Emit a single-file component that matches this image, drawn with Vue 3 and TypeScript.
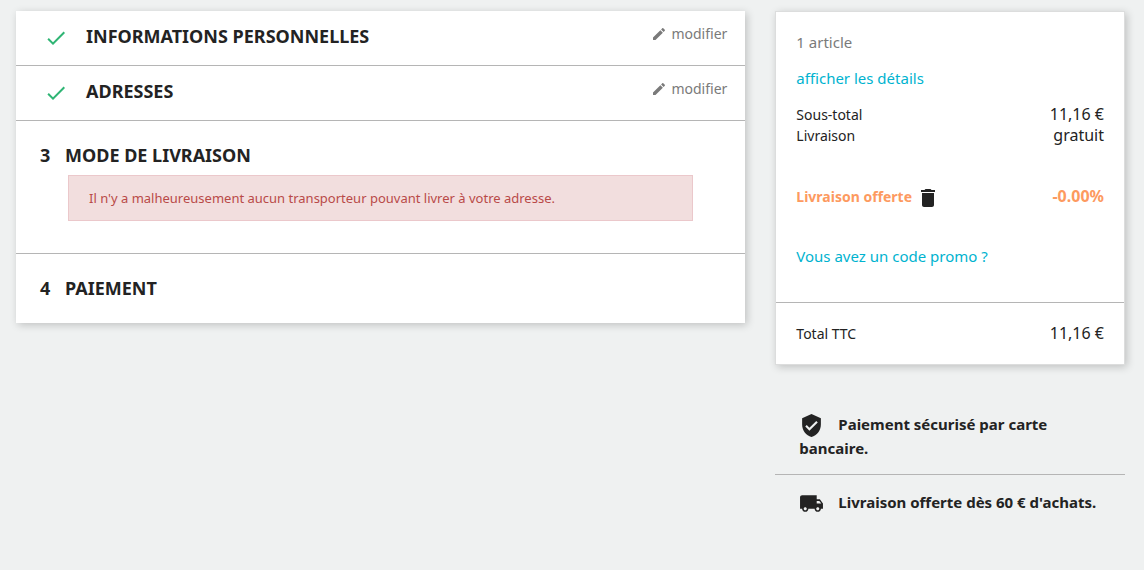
<script setup lang="ts">
interface DoneStep {
  id: string
  title: string
}

interface Reassurance {
  id: string
  text: string
  icon: string
}

const doneSteps: DoneStep[] = [
  { id: 'personal', title: 'Informations personnelles' },
  { id: 'addresses', title: 'Adresses' },
]

const reassurances: Reassurance[] = [
  {
    id: 'secure',
    text: 'Paiement sécurisé par carte bancaire.',
    icon: 'M12 1L3 5v6c0 5.55 3.84 10.74 9 12 5.16-1.26 9-6.45 9-12V5l-9-4zm-2 16l-4-4 1.41-1.41L10 14.17l6.59-6.59L18 9l-8 8z',
  },
  {
    id: 'shipping',
    text: "Livraison offerte dès 60 € d'achats.",
    icon: 'M20 8h-3V4H3c-1.1 0-2 .9-2 2v11h2c0 1.66 1.34 3 3 3s3-1.34 3-3h6c0 1.66 1.34 3 3 3s3-1.34 3-3h2v-5l-3-4zM6 18.5c-.83 0-1.5-.67-1.5-1.5s.67-1.5 1.5-1.5 1.5.67 1.5 1.5-.67 1.5-1.5 1.5zm13.5-9l1.96 2.5H17V9.5h2.5zm-1.5 9c-.83 0-1.5-.67-1.5-1.5s.67-1.5 1.5-1.5 1.5.67 1.5 1.5-.67 1.5-1.5 1.5z',
  },
]
</script>

<template>
  <div class="checkout">
    <main class="steps">
      <div class="card">
        <section v-for="step in doneSteps" :key="step.id" class="step step-done">
          <svg class="check" viewBox="0 0 24 24" aria-hidden="true">
            <path d="M9 16.17L4.83 12l-1.42 1.41L9 19 21 7l-1.41-1.41z" />
          </svg>
          <h1>{{ step.title }}</h1>
          <a class="edit" href="#">
            <svg viewBox="0 0 24 24" aria-hidden="true">
              <path d="M3 17.25V21h3.75L17.81 9.94l-3.75-3.75L3 17.25zM20.71 7.04c.39-.39.39-1.02 0-1.41l-2.34-2.34c-.39-.39-1.02-.39-1.41 0l-1.83 1.83 3.75 3.75 1.83-1.83z" />
            </svg>
            <span>modifier</span>
          </a>
        </section>

        <section class="step step-current">
          <h1><span class="number">3</span>Mode de livraison</h1>
          <p class="alert" role="alert">
            Il n'y a malheureusement aucun transporteur pouvant livrer à votre adresse.
          </p>
        </section>

        <section class="step step-next">
          <h1><span class="number">4</span>Paiement</h1>
        </section>
      </div>
    </main>

    <aside class="side">
      <div class="card summary">
        <div class="summary-body">
          <p class="count">1 article</p>
          <p class="details"><a href="#">afficher les détails</a></p>
          <div class="line">
            <span class="label">Sous-total</span>
            <span class="value">11,16 €</span>
          </div>
          <div class="line">
            <span class="label">Livraison</span>
            <span class="value">gratuit</span>
          </div>
          <div class="line voucher">
            <span class="label">Livraison offerte</span>
            <a class="remove" href="#" aria-label="Supprimer">
              <svg viewBox="0 0 24 24" aria-hidden="true">
                <path d="M6 19c0 1.1.9 2 2 2h8c1.1 0 2-.9 2-2V7H6v12zM19 4h-3.5l-1-1h-5l-1 1H5v2h14V4z" />
              </svg>
            </a>
            <span class="value">-0.00%</span>
          </div>
          <p class="promo"><a href="#">Vous avez un code promo ?</a></p>
        </div>
        <div class="line total">
          <span class="label">Total TTC</span>
          <span class="value">11,16 €</span>
        </div>
      </div>

      <ul class="reassurance">
        <li v-for="item in reassurances" :key="item.id">
          <svg viewBox="0 0 24 24" aria-hidden="true"><path :d="item.icon" /></svg>
          <span>{{ item.text }}</span>
        </li>
      </ul>
    </aside>
  </div>
</template>

<style>
body {
  margin: 0;
  background: #eff1f1;
}
</style>

<style scoped>
.checkout {
  display: grid;
  grid-template-columns: minmax(0, 2fr) minmax(0, 1fr);
  align-items: start;
  padding: 11px 4px 0 1px;
  color: #232323;
  font-family: "Noto Sans", sans-serif;
  font-size: 15px;
  line-height: 20px;
}

.steps,
.side {
  padding: 0 15px;
}

.checkout p,
.checkout h1 {
  margin: 0;
}

a {
  color: #00b3cf;
  text-decoration: none;
}

svg {
  fill: currentColor;
}

.card {
  background: #fff;
  box-shadow: 2px 2px 8px 0 rgba(0, 0, 0, 0.2);
}

.step + .step {
  border-top: 1px solid #b5b5b5;
}

.step h1 {
  font-size: 18px;
  font-weight: 700;
  line-height: 20px;
  text-transform: uppercase;
}

.step-done {
  display: flex;
  align-items: flex-start;
  padding: 15px 18px 15px 28px;
}

.step-done h1 {
  flex: 1;
}

.check {
  width: 24px;
  height: 24px;
  margin-right: 18px;
  color: #2fb574;
}

.edit {
  display: flex;
  gap: 4px;
  align-items: center;
  height: 16px;
  color: #7a7a7a;
  font-size: 14px;
}

.edit svg {
  width: 16px;
  height: 16px;
}

.step-current {
  padding: 24px 52px 32px 24px;
}

.step-next {
  padding: 24px 24px 25px;
}

.number {
  display: inline-block;
  width: 25px;
}

.checkout .alert {
  margin: 10px 0 0 28px;
  padding: 12px 20px;
  border: 1px solid #ebc8cb;
  background: #f2dede;
  color: #b94a48;
  font-size: 13px;
}

.summary {
  border: 1px solid #dcdddd;
}

.summary-body {
  padding: 20px 20px 36px;
}

.count {
  color: #7a7a7a;
}

.checkout .details {
  margin: 16px 0;
}

.line {
  display: flex;
  align-items: center;
  line-height: 21px;
}

.label {
  font-size: 14px;
}

.value {
  margin-left: auto;
  font-size: 16px;
}

.voucher {
  margin: 36px 0;
  color: #fd9a5f;
  font-weight: 700;
}

.remove {
  display: flex;
  margin-left: 4px;
  padding-top: 4px;
  color: #232323;
}

.remove svg {
  width: 24px;
  height: 24px;
}

.total {
  padding: 20px;
  border-top: 1px solid #b5b5b5;
}

.reassurance {
  margin: 32px 0 0;
  padding: 0;
  list-style: none;
}

.reassurance li {
  padding: 15px 24px 14px;
  font-weight: 700;
  line-height: 24px;
}

.reassurance li + li {
  border-top: 1px solid #b5b5b5;
}

.reassurance svg {
  width: 25px;
  height: 25px;
  margin: -4px 14px -4px 0;
  vertical-align: middle;
}
</style>
